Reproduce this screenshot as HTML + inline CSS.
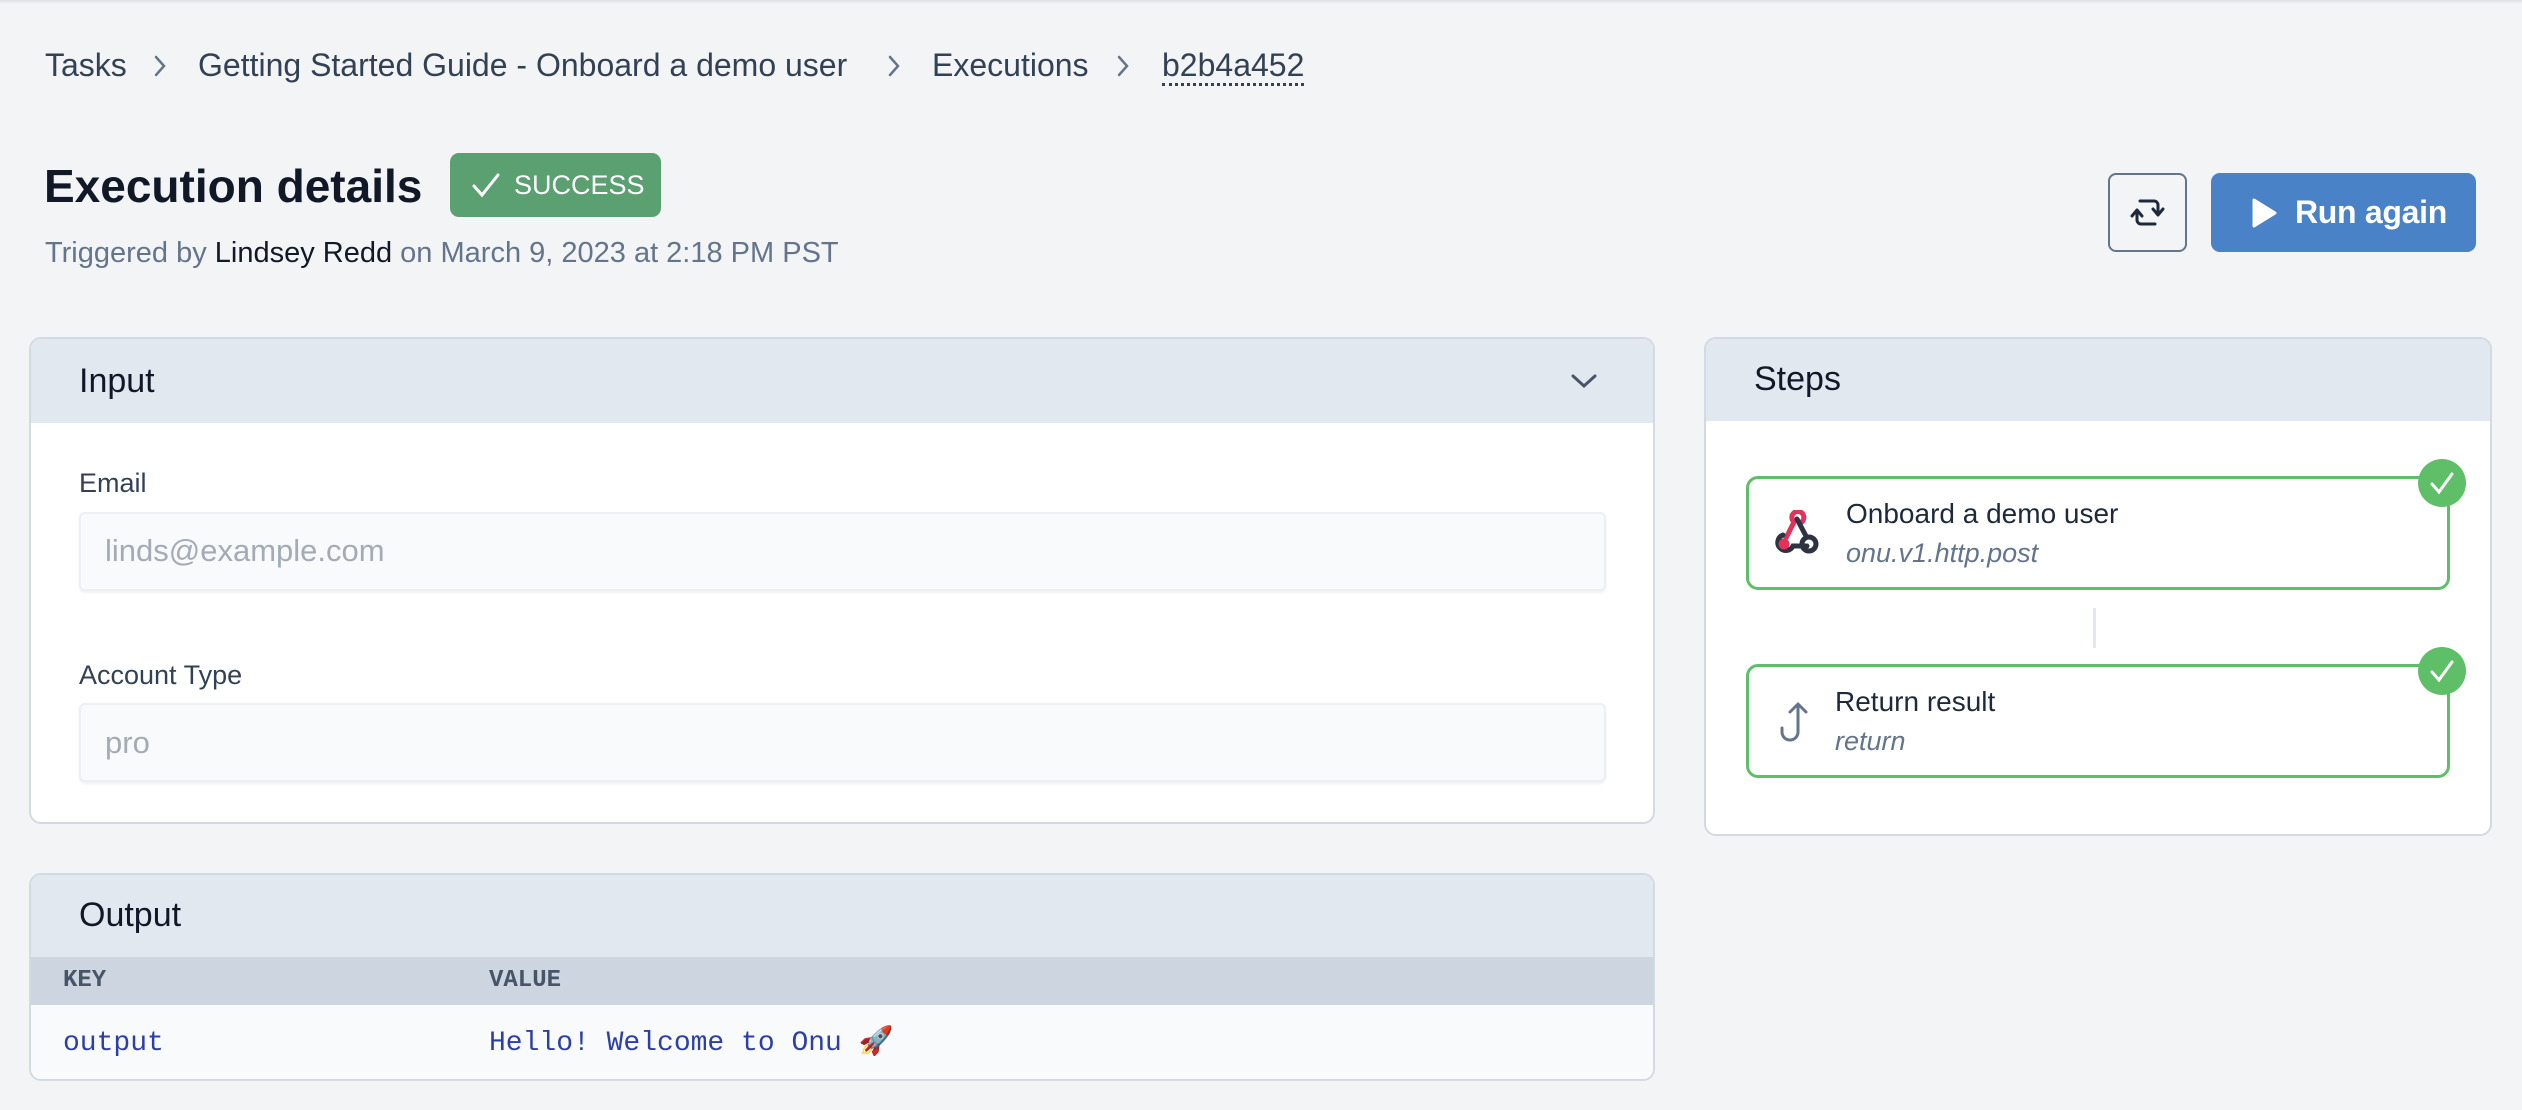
<!DOCTYPE html>
<html><head><meta charset="utf-8"><style>
*{box-sizing:border-box;margin:0;padding:0}
body{width:2522px;height:1110px;background:#f3f4f6;font-family:"Liberation Sans",sans-serif;position:relative;overflow:hidden;color:#1e293b}
.a{position:absolute;white-space:nowrap}
.card{position:absolute;background:#fff;border:2px solid #d3dae4;border-radius:12px;overflow:hidden}
.hd{position:absolute;left:0;right:0;top:0;background:#e2e8f0}
.field{position:absolute;background:#f8fafc;border:2px solid #eceff3;border-radius:6px;box-shadow:0 2px 2px rgba(0,0,0,.06)}
.step{position:absolute;border:3px solid #5fbf68;border-radius:12px;background:#fff}
.chk{position:absolute;width:48px;height:48px;border-radius:50%;background:#5fbf68}
.bc{font-size:32px;color:#334155;line-height:36px;top:47px}
</style></head><body>
<div class="a" style="left:0;top:0;width:2522px;height:4px;background:linear-gradient(#dde0e4,#f3f4f6)"></div>

<div class="a bc" style="left:45px">Tasks</div>
<svg class="a" style="left:152px;top:54px" width="16" height="24" viewBox="0 0 16 24" fill="none" stroke="#64748b" stroke-width="2.5" stroke-linecap="round"><path d="M4 3l8 9-8 9"/></svg>
<div class="a bc" style="left:198px">Getting Started Guide - Onboard a demo user</div>
<svg class="a" style="left:886px;top:54px" width="16" height="24" viewBox="0 0 16 24" fill="none" stroke="#64748b" stroke-width="2.5" stroke-linecap="round"><path d="M4 3l8 9-8 9"/></svg>
<div class="a bc" style="left:932px">Executions</div>
<svg class="a" style="left:1115px;top:54px" width="16" height="24" viewBox="0 0 16 24" fill="none" stroke="#64748b" stroke-width="2.5" stroke-linecap="round"><path d="M4 3l8 9-8 9"/></svg>
<div class="a bc" style="left:1162px;border-bottom:3px dotted #334155">b2b4a452</div>

<div class="a" style="left:44px;top:158px;font-size:46px;font-weight:bold;color:#111827;line-height:56px">Execution details</div>
<div class="a" style="left:450px;top:153px;width:211px;height:64px;background:#5aa070;border-radius:9px;color:#fff;font-size:27px;line-height:64px">
<svg class="a" style="left:20px;top:18px" width="32" height="28" viewBox="0 0 32 28" fill="none" stroke="#fff" stroke-width="3" stroke-linecap="round"><path d="M4 15l8 9L28 4"/></svg>
<span class="a" style="left:64px;top:0">SUCCESS</span></div>
<div class="a" style="left:45px;top:237px;font-size:29px;color:#64748b;line-height:32px">Triggered by <span style="color:#111827">Lindsey Redd</span> on March 9, 2023 at 2:18 PM PST</div>

<div class="a" style="left:2108px;top:173px;width:79px;height:79px;border:2px solid #64748b;border-radius:8px;background:#f3f4f6">
<svg width="75" height="75" viewBox="0 0 75 75" fill="none" stroke="#1e293b" stroke-width="3" stroke-linecap="round" stroke-linejoin="round"><path d="M30 26h14a4 4 0 0 1 4 4v9M43 34l5 6 5-6M45 49H31a4 4 0 0 1-4-4v-9M22 41l5-6 5 6"/></svg></div>
<div class="a" style="left:2211px;top:173px;width:265px;height:79px;background:#4a82c8;border-radius:9px;color:#fff;font-size:32px;line-height:79px">
<svg class="a" style="left:40px;top:25px" width="26" height="30" viewBox="0 0 26 30"><path d="M3 2L24 15L3 28Z" fill="#fff" stroke="#fff" stroke-width="3" stroke-linejoin="round"/></svg>
<span class="a" style="left:84px;top:0;font-weight:bold;letter-spacing:-0.3px">Run again</span></div>

<div class="card" style="left:29px;top:337px;width:1626px;height:487px">
<div class="hd" style="height:84px"></div>
<div class="a" style="left:48px;top:22px;font-size:34px;color:#111827;line-height:40px">Input</div>
<svg class="a" style="left:1538px;top:32px" width="30" height="20" viewBox="0 0 30 20" fill="none" stroke="#475569" stroke-width="3" stroke-linecap="round"><path d="M4 5l11 10L26 5"/></svg>
<div class="a" style="left:48px;top:129px;font-size:27px;color:#334155;line-height:30px">Email</div>
<div class="field" style="left:48px;top:173px;width:1527px;height:79px"></div>
<div class="a" style="left:74px;top:195px;font-size:31px;color:#a4abb6;line-height:34px">linds@example.com</div>
<div class="a" style="left:48px;top:321px;font-size:27px;color:#334155;line-height:30px">Account Type</div>
<div class="field" style="left:48px;top:364px;width:1527px;height:79px"></div>
<div class="a" style="left:74px;top:387px;font-size:31px;color:#a4abb6;line-height:34px">pro</div>
</div>

<div class="card" style="left:29px;top:873px;width:1626px;height:208px">
<div class="hd" style="height:82px"></div>
<div class="a" style="left:48px;top:20px;font-size:34px;color:#111827;line-height:40px">Output</div>
<div class="a" style="left:0;top:82px;width:1626px;height:48px;background:#cdd5e0"></div>
<div class="a" style="left:32px;top:93px;font-family:'Liberation Mono',monospace;font-weight:bold;font-size:24px;color:#475569;line-height:26px">KEY</div>
<div class="a" style="left:458px;top:93px;font-family:'Liberation Mono',monospace;font-weight:bold;font-size:24px;color:#475569;line-height:26px">VALUE</div>
<div class="a" style="left:0;top:130px;width:1626px;height:78px;background:#f8fafc"></div>
<div class="a" style="left:32px;top:152px;font-family:'Liberation Mono',monospace;font-size:28px;color:#2b3fa6;line-height:34px">output</div>
<div class="a" style="left:458px;top:152px;font-family:'Liberation Mono',monospace;font-size:28px;color:#2b3fa6;line-height:34px">Hello! Welcome to Onu 🚀</div>
</div>

<div class="card" style="left:1704px;top:337px;width:788px;height:499px">
<div class="hd" style="height:82px"></div>
<div class="a" style="left:48px;top:20px;font-size:34px;color:#111827;line-height:40px">Steps</div>
</div>

<div class="step" style="left:1746px;top:476px;width:704px;height:114px"></div>
<svg class="a" style="left:1772px;top:510px" width="48" height="46" viewBox="0 0 48 46" fill="none" stroke-width="5" stroke-linecap="round"><path d="M14 28L22 12a6 6 0 1 1 6 1" stroke="#e0325a"/><path d="M25 9l9 17M11 25a8 8 0 1 0 10 11h14" stroke="#2d3340"/><circle cx="37" cy="34" r="7" stroke="#2d3340"/><circle cx="12" cy="34" r="3" fill="#e0325a" stroke="#e0325a"/></svg>
<div class="a" style="left:1846px;top:498px;font-size:28px;color:#1e293b;line-height:32px">Onboard a demo user</div>
<div class="a" style="left:1846px;top:537px;font-size:27px;font-style:italic;color:#64748b;line-height:32px">onu.v1.http.post</div>
<div class="chk" style="left:2418px;top:459px"><svg width="48" height="48" viewBox="0 0 48 48" fill="none" stroke="#fff" stroke-width="3" stroke-linecap="round"><path d="M14 25l7 8 13-18"/></svg></div>

<div class="a" style="left:2093px;top:608px;width:3px;height:40px;background:#e2e8f0"></div>

<div class="step" style="left:1746px;top:664px;width:704px;height:114px"></div>
<svg class="a" style="left:1772px;top:698px" width="40" height="48" viewBox="0 0 40 48" fill="none" stroke="#64748b" stroke-width="3" stroke-linecap="round" stroke-linejoin="round"><path d="M26 6v28a8 8 0 0 1-16 0v-4M18 14l8-8 8 8"/></svg>
<div class="a" style="left:1835px;top:686px;font-size:28px;color:#1e293b;line-height:32px">Return result</div>
<div class="a" style="left:1835px;top:725px;font-size:27px;font-style:italic;color:#64748b;line-height:32px">return</div>
<div class="chk" style="left:2418px;top:647px"><svg width="48" height="48" viewBox="0 0 48 48" fill="none" stroke="#fff" stroke-width="3" stroke-linecap="round"><path d="M14 25l7 8 13-18"/></svg></div>
</body></html>
